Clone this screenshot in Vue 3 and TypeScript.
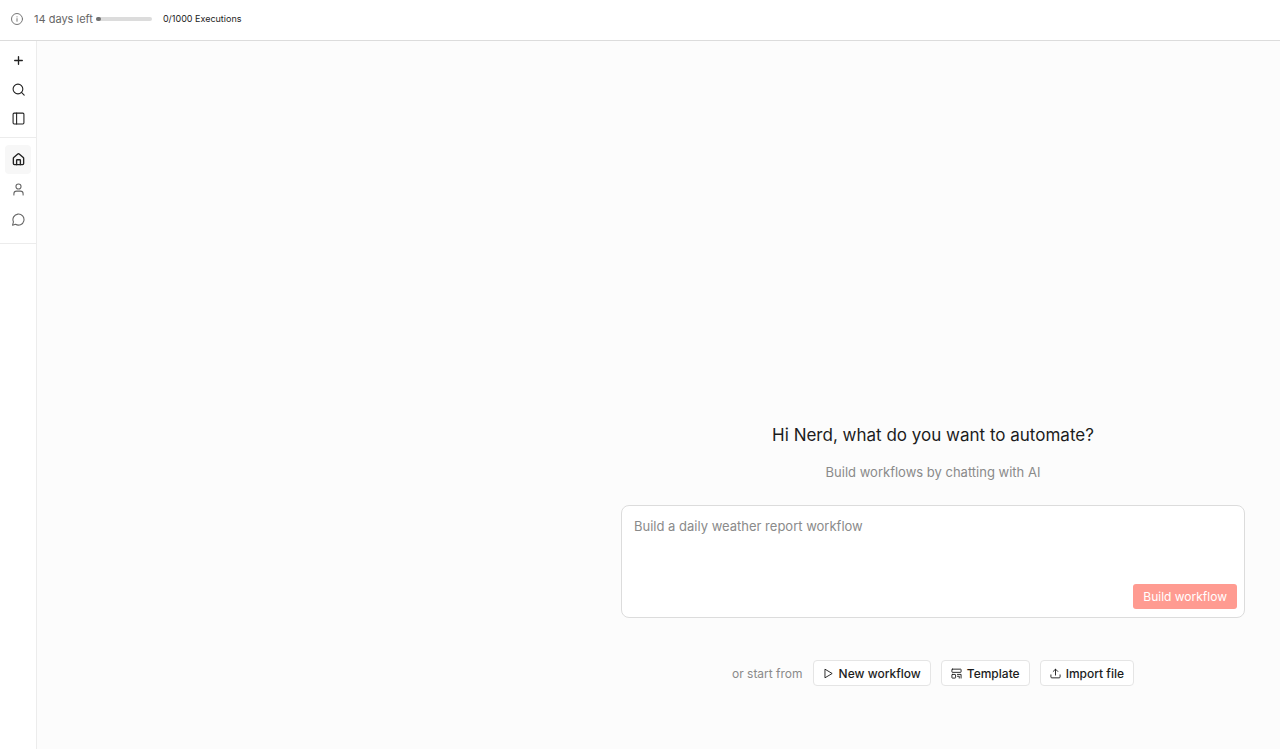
<script setup lang="ts">
import { ref } from 'vue'

const prompt = ref('')
const used = 0
const quota = 1000
const daysLeft = 14
</script>

<template>
  <div class="app">
    <header class="banner">
      <svg class="info" viewBox="0 0 24 24" aria-hidden="true">
        <circle cx="12" cy="12" r="11" />
        <path d="M12 16.5v-5.2M12 7.6v.3" />
      </svg>
      <span class="days">{{ daysLeft }} days left</span>
      <span class="meter"><span class="meter-fill"></span></span>
      <span class="executions">{{ used }}/{{ quota }} Executions</span>
    </header>

    <div class="body">
      <nav class="sidebar" aria-label="Main">
        <div class="tools">
          <button type="button" class="tool" aria-label="Add">
            <svg class="bold" viewBox="0 0 24 24"><path d="M5 12h14M12 5v14" /></svg>
          </button>
          <button type="button" class="tool" aria-label="Search">
            <svg viewBox="0 0 24 24"><circle cx="11" cy="11" r="9" /><path d="m22.500 22.500-5-5" /></svg>
          </button>
          <button type="button" class="tool" aria-label="Toggle sidebar">
            <svg viewBox="0 0 24 24"><rect x="2" y="2" width="20" height="20" rx="2" /><path d="M8.5 2v20" /></svg>
          </button>
        </div>
        <div class="links">
          <a href="#home" class="link active" aria-label="Home">
            <svg class="bold" viewBox="0 0 24 24">
              <path d="M15.5 21.5v-8a1 1 0 0 0-1-1h-5a1 1 0 0 0-1 1v8" />
              <path d="M2.5 10a2 2 0 0 1 .7-1.5l7.500-6.500a2 2 0 0 1 2.600 0l7.500 6.500a2 2 0 0 1 .7 1.500v9.500a2 2 0 0 1-2 2h-15a2 2 0 0 1-2-2z" />
            </svg>
          </a>
          <a href="#personal" class="link" aria-label="Personal">
            <svg viewBox="0 0 24 24"><circle cx="12" cy="6.500" r="4.700" /><path d="M20.500 22v-2a5 5 0 0 0-5-5h-7a5 5 0 0 0-5 5v2" /></svg>
          </a>
          <a href="#chat" class="link" aria-label="Chat">
            <svg viewBox="0 0 24 24"><path d="M6.500 20.800A10.200 10.200 0 1 0 2.700 16.500L1 22.500z" /></svg>
          </a>
        </div>
      </nav>

      <main class="main">
        <section class="starter">
          <h1>Hi Nerd, what do you want to automate?</h1>
          <p class="subtitle">Build workflows by chatting with AI</p>
          <form class="prompt" @submit.prevent>
            <textarea v-model="prompt" aria-label="Workflow description" placeholder="Build a daily weather report workflow"></textarea>
            <button type="submit" class="build">Build workflow</button>
          </form>
          <div class="options">
            <span>or start from</span>
            <button type="button" class="option">
              <svg viewBox="0 0 24 24"><path d="M5 3l15 9-15 9z" /></svg>
              New workflow
            </button>
            <button type="button" class="option">
              <svg viewBox="0 0 24 24">
                <rect x="2" y="2.500" width="20" height="7" rx="1" />
                <rect x="2" y="14" width="8" height="8" rx="1" />
                <path d="M14 14H22V22M14 18H18V22" />
              </svg>
              Template
            </button>
            <button type="button" class="option">
              <svg viewBox="0 0 24 24"><path d="M2 15v4.500a2 2 0 0 0 2 2h16a2 2 0 0 0 2-2V15M12 15.500V3M7 7.500l5-5 5 5" /></svg>
              Import file
            </button>
          </div>
        </section>
      </main>
    </div>
  </div>
</template>

<style>
body {
  margin: 0;
}
</style>

<style scoped>
.app {
  display: flex;
  flex-direction: column;
  min-height: 100vh;
  font-family: Inter, sans-serif;
  color: #1c1c1c;
  background: #fff;
}

button,
textarea {
  font-family: inherit;
}

svg {
  display: block;
  fill: none;
  stroke: currentColor;
  stroke-width: 2;
  stroke-linecap: round;
  stroke-linejoin: round;
}

.banner {
  display: flex;
  align-items: center;
  box-sizing: border-box;
  height: 41px;
  padding: 0 11px 3px;
  border-bottom: 1px solid #dcdcdc;
}

.info {
  width: 12px;
  height: 12px;
  color: #777;
  overflow: visible;
}

.days {
  margin-left: 11px;
  font-size: 11px;
  color: #666;
}

.meter {
  width: 56px;
  height: 4px;
  margin: 0 11px 0 3px;
  border-radius: 2px;
  background: #dcdcdc;
}

.meter-fill {
  display: block;
  width: 5px;
  height: 4px;
  border-radius: 2px;
  background: #707070;
}

.executions {
  font-size: 9px;
}

.body {
  display: flex;
  flex: 1;
}

.sidebar {
  flex: none;
  width: 36px;
  border-right: 1px solid #ececec;
}

.tools,
.links {
  display: flex;
  flex-direction: column;
  align-items: center;
  border-bottom: 1px solid #ececec;
}

.tools {
  gap: 3px;
  padding: 6px 0;
}

.links {
  gap: 1px;
  padding: 7px 0 9px;
}

.tool,
.link {
  display: flex;
  align-items: center;
  justify-content: center;
  width: 26px;
  padding: 0;
  border: 0;
  border-radius: 4px;
  background: none;
}

.tool {
  height: 26px;
  color: #222;
}

.link {
  height: 29px;
  color: #666;
}

.active {
  color: #222;
  background: #f7f7f7;
}

.sidebar svg {
  width: 13px;
  height: 13px;
}

.sidebar .bold {
  stroke-width: 2.500;
}

.main {
  display: flex;
  flex: 1;
  align-items: flex-end;
  justify-content: flex-end;
  padding: 0 35px 63px;
  background: #fcfcfc;
}

.starter {
  width: 100%;
  max-width: 624px;
  text-align: center;
}

h1 {
  margin: 0;
  font-size: 17px;
  font-weight: 400;
  line-height: 24px;
}

.subtitle {
  margin: 15px 0 23px;
  font-size: 13px;
  line-height: 20px;
  color: #8a8a8a;
}

.prompt {
  display: flex;
  flex-direction: column;
  border: 1px solid #dcdcdc;
  border-radius: 8px;
  background: #fff;
}

textarea {
  height: 67px;
  padding: 0;
  margin: 11px 12px 0;
  border: 0;
  outline: 0;
  resize: none;
  background: none;
  font-size: 13px;
  line-height: 18px;
  color: #1c1c1c;
}

textarea::placeholder {
  color: #8a8a8a;
  opacity: 1;
}

.build {
  align-self: flex-end;
  height: 25px;
  margin: 0 7px 8px;
  padding: 0 10px;
  border: 0;
  border-radius: 3px;
  background: #ff9b91;
  color: #fff;
  font-size: 12px;
}

.options {
  display: flex;
  align-items: center;
  justify-content: center;
  gap: 10px;
  margin-top: 42px;
  font-size: 12px;
  color: #8a8a8a;
}

.option {
  display: flex;
  align-items: center;
  gap: 5px;
  height: 26px;
  padding: 0 9px;
  border: 1px solid #e5e5e5;
  border-radius: 4px;
  background: #fff;
  color: #1c1c1c;
  font-size: 12px;
  font-weight: 500;
}

.option svg {
  width: 11px;
  height: 11px;
}
</style>
